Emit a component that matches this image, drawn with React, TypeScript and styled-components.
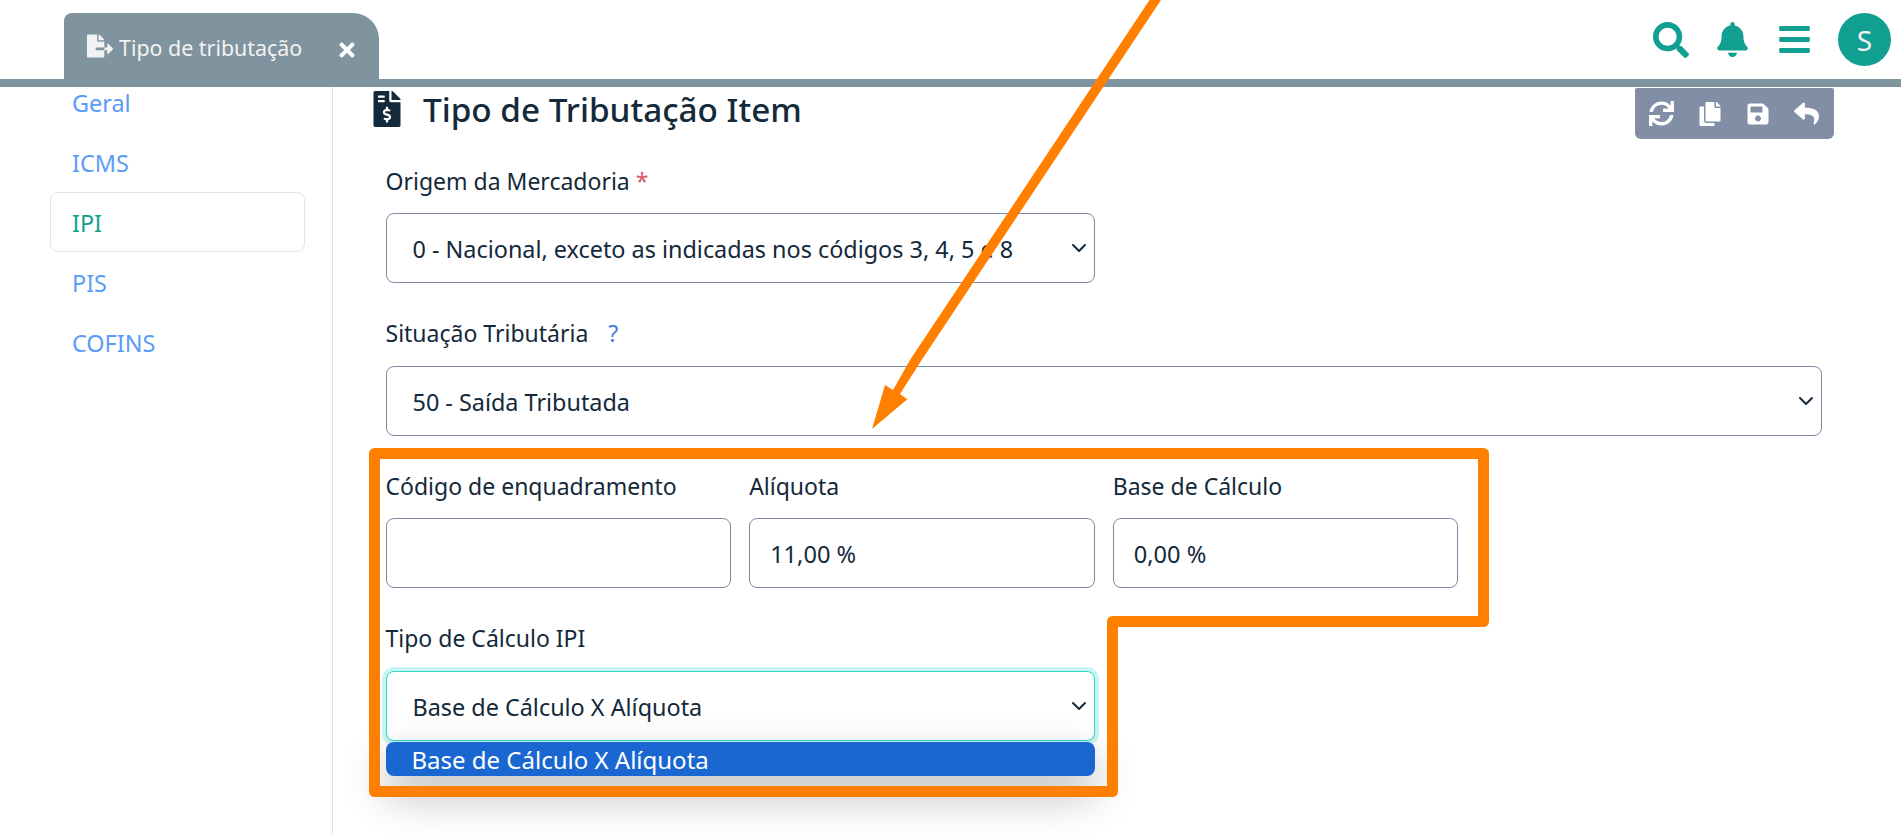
import React from "react";
import styled, { createGlobalStyle } from "styled-components";
import { FaSearch, FaBell, FaBars, FaSync, FaCopy, FaSave, FaReply, FaFileInvoiceDollar, FaFileExport, FaTimes } from "react-icons/fa";

const chevron = `url("data:image/svg+xml,%3csvg xmlns='http://www.w3.org/2000/svg' viewBox='0 0 16 16'%3e%3cpath fill='none' stroke='%23192a3a' stroke-linecap='round' stroke-linejoin='round' stroke-width='2' d='M2 5l6 6 6-6'/%3e%3c/svg%3e")`;

const Global = createGlobalStyle`
  html, body { margin: 0; padding: 0; background: #fff; }
  * { box-sizing: border-box; }
  body { font-family: "Noto Sans", "Open Sans", sans-serif; color: #14293a; }
`;

const Page = styled.div`
  position: relative;
  width: 1901px;
  height: 835px;
  overflow: hidden;
  background: #fff;
`;

const Header = styled.header`
  position: relative;
  z-index: 2;
  display: flex;
  justify-content: space-between;
  align-items: flex-start;
  height: 87px;
  padding: 13px 10px 0 64px;
  background: #fff;
  border-bottom: 8px solid #7f949e;
`;

const Tab = styled.div`
  display: flex;
  align-items: center;
  width: 315px;
  height: 66px;
  padding: 0 21px 0 23px;
  background: #7f949e;
  color: #f2f2f2;
  border-radius: 8px 26px 0 0;
  font-size: 21.4px;
  svg { flex: none; }
`;

const TabText = styled.span`
  flex: 1;
  margin: 3px 0 0 6px;
`;

const TabClose = styled.span`
  display: flex;
  color: #fff;
  margin-top: 8px;
`;

const HeaderActions = styled.div`
  display: flex;
  align-items: center;
  gap: 26.5px;
  height: 53px;
  color: #119f91;
`;

const Avatar = styled.div`
  display: flex;
  align-items: center;
  justify-content: center;
  width: 53px;
  height: 53px;
  border-radius: 50%;
  background: #119f91;
  color: #f2f2f2;
  font-size: 28px;
`;

const Body = styled.div`
  display: flex;
  height: 748px;
`;

const Sidebar = styled.nav`
  flex: none;
  width: 333px;
  padding-left: 50px;
  border-right: 1px solid #dee2e6;
`;

const NavList = styled.div`
  display: flex;
  flex-direction: column;
  width: 255px;
  margin-top: -15px;
`;

const NavItem = styled.div<{ $active?: boolean }>`
  display: flex;
  align-items: center;
  height: 60px;
  padding: 1px 0 0 21px;
  font-size: 23.4px;
  color: ${(p) => (p.$active ? "#119f91" : "#5b9cf6")};
  border: 1px solid ${(p) => (p.$active ? "#e1e4ea" : "transparent")};
  border-radius: 8px;
`;

const Main = styled.main`
  flex: 1;
  padding: 1px 67px 0 36px;
`;

const TitleRow = styled.div`
  display: flex;
  justify-content: space-between;
  align-items: flex-start;
  height: 77.5px;
`;

const Title = styled.h1`
  display: flex;
  align-items: center;
  gap: 18px;
  margin: 3px 0 0;
  height: 36px;
  font-size: 33.3px;
  font-weight: 500;
  color: #14293a;
`;

const Toolbar = styled.div`
  display: flex;
  align-items: center;
  gap: 24px;
  width: 199px;
  height: 51px;
  padding-left: 14px;
  background: #828ea6;
  color: #fff;
  border-radius: 2px 2px 6px 6px;
`;

const Form = styled.form`
  display: grid;
  grid-template-columns: repeat(12, 1fr);
  column-gap: 18px;
  row-gap: 35px;
  padding: 0 12px 0 16.5px;
`;

const Field = styled.div<{ $span: number }>`
  position: relative;
  grid-column: span ${(p) => p.$span};
`;

const Label = styled.label`
  display: block;
  height: 30px;
  margin-bottom: 17.67px;
  font-size: 23px;
  line-height: 30px;
  color: #14293a;
`;

const Required = styled.span`
  color: #dc5468;
`;

const Help = styled.span`
  margin-left: 14px;
  color: #4a7bd6;
`;

const Select = styled.select<{ $focused?: boolean }>`
  display: block;
  width: 100%;
  height: 70px;
  padding: 2px 48px 0 26px;
  appearance: none;
  font: inherit;
  font-size: 23.4px;
  color: #14293a;
  background: #fff ${chevron} no-repeat right 7px center / 16px 16px;
  border: 1px solid ${(p) => (p.$focused ? "#2fd6c9" : "#7d8aa5")};
  border-radius: 8px;
  box-shadow: ${(p) => (p.$focused ? "0 0 0 4px #c8f5f1" : "none")};
  outline: none;
`;

const Input = styled.input`
  display: block;
  width: 100%;
  height: 70px;
  padding: 2px 20px 0;
  font: inherit;
  font-size: 23.6px;
  color: #14293a;
  background: #fff;
  border: 1px solid #7d8aa5;
  border-radius: 8px;
  outline: none;
`;

const Menu = styled.div`
  position: absolute;
  left: 0;
  right: 0;
  top: 118.7px;
  height: 34px;
  padding-left: 26px;
  background: #1a67d2;
  color: #fff;
  font-size: 24px;
  line-height: 35px;
  border-radius: 8px;
  box-shadow: 0 18px 44px rgba(0, 0, 0, 0.3);
`;

const Annotation = styled.svg`
  position: absolute;
  inset: 0;
  z-index: 3;
  pointer-events: none;
`;

export default function App() {
  return (
    <Page>
      <Global />
      <Header>
        <Tab>
          <FaFileExport size={26} />
          <TabText>Tipo de tributação</TabText>
          <TabClose><FaTimes size={22} /></TabClose>
        </Tab>
        <HeaderActions>
          <FaSearch size={36} />
          <FaBell size={35} />
          <FaBars size={35} />
          <Avatar>S</Avatar>
        </HeaderActions>
      </Header>
      <Body>
        <Sidebar>
          <NavList>
            <NavItem>Geral</NavItem>
            <NavItem>ICMS</NavItem>
            <NavItem $active>IPI</NavItem>
            <NavItem>PIS</NavItem>
            <NavItem>COFINS</NavItem>
          </NavList>
        </Sidebar>
        <Main>
          <TitleRow>
            <Title><FaFileInvoiceDollar size={36} />Tipo de Tributação Item</Title>
            <Toolbar>
              <FaSync size={25} />
              <FaCopy size={24} />
              <FaSave size={24} />
              <FaReply size={25} />
            </Toolbar>
          </TitleRow>
          <Form>
            <Field $span={6}>
              <Label>Origem da Mercadoria <Required>*</Required></Label>
              <Select defaultValue="0">
                <option value="0">0 - Nacional, exceto as indicadas nos códigos 3, 4, 5 e 8</option>
              </Select>
            </Field>
            <Field $span={12}>
              <Label>Situação Tributária <Help>?</Help></Label>
              <Select defaultValue="50">
                <option value="50">50 - Saída Tributada</option>
              </Select>
            </Field>
            <Field $span={3}>
              <Label>Código de enquadramento</Label>
              <Input defaultValue="" />
            </Field>
            <Field $span={3}>
              <Label>Alíquota</Label>
              <Input defaultValue="11,00 %" />
            </Field>
            <Field $span={3}>
              <Label>Base de Cálculo</Label>
              <Input defaultValue="0,00 %" />
            </Field>
            <Field $span={6}>
              <Label>Tipo de Cálculo IPI</Label>
              <Select $focused defaultValue="x">
                <option value="x">Base de Cálculo X Alíquota</option>
              </Select>
              <Menu>Base de Cálculo X Alíquota</Menu>
            </Field>
          </Form>
        </Main>
      </Body>
      <Annotation width="1901" height="835" viewBox="0 0 1901 835">
        <path d="M374.5 453.5H1483.5V621.5H1112.5V791.5H374.5Z" fill="none" stroke="#ff8000" strokeWidth="11" strokeLinejoin="round" />
        <polygon points="1149.5,0 1161,0 921.7,360 900,394 907.3,399.3 872,429 885,385 893,390 910,360" fill="#ff8000" />
      </Annotation>
    </Page>
  );
}
